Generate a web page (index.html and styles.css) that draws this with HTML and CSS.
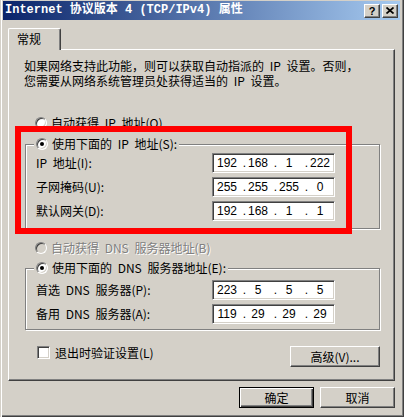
FILE: index.html
```html
<!DOCTYPE html>
<html lang="zh-CN">
<head>
    <meta charset="UTF-8">
    <title>Internet 协议版本 4 (TCP/IPv4) 属性</title>
    <link rel="stylesheet" href="styles.css">
</head>
<body>
    <div class="window">
        <div class="titlebar">
            <span class="title">Internet 协议版本 4 (TCP/IPv4) 属性</span>
            <div class="caption-btns">
                <span class="cbtn help">?</span>
                <span class="cbtn close">
                    <svg width="8" height="7" viewBox="0 0 8 7"><path d="M0.5 0.5L7.5 6.5M7.5 0.5L0.5 6.5" stroke="#000" stroke-width="1.7"/></svg>
                </span>
            </div>
        </div>

        <div class="content">
            <div class="tabs">
                <div class="tab active">常规</div>
            </div>

            <div class="panel">
                <div class="intro">
                    <p>如果网络支持此功能，则可以获取自动指派的 IP 设置。否则，</p>
                    <p>您需要从网络系统管理员处获得适当的 IP 设置。</p>
                </div>

                <div class="option first">
                    <span class="radio"></span>
                    <span>自动获得 IP 地址(O)</span>
                </div>

                <div class="group ip-group">
                    <div class="legend">
                        <span class="radio checked"></span>
                        <span>使用下面的 IP 地址(S):</span>
                    </div>
                    <div class="rows">
                        <label>IP 地址(I):</label>
                        <div class="ip-box"><span>192</span><i>.</i><span>168</span><i>.</i><span>1</span><i>.</i><span>222</span></div>
                        <label>子网掩码(U):</label>
                        <div class="ip-box"><span>255</span><i>.</i><span>255</span><i>.</i><span>255</span><i>.</i><span>0</span></div>
                        <label>默认网关(D):</label>
                        <div class="ip-box"><span>192</span><i>.</i><span>168</span><i>.</i><span>1</span><i>.</i><span>1</span></div>
                    </div>
                </div>

                <div class="option disabled dns-auto">
                    <span class="radio"></span>
                    <span>自动获得 DNS 服务器地址(B)</span>
                </div>

                <div class="group dns-group">
                    <div class="legend">
                        <span class="radio checked"></span>
                        <span>使用下面的 DNS 服务器地址(E):</span>
                    </div>
                    <div class="rows">
                        <label>首选 DNS 服务器(P):</label>
                        <div class="ip-box"><span>223</span><i>.</i><span>5</span><i>.</i><span>5</span><i>.</i><span>5</span></div>
                        <label>备用 DNS 服务器(A):</label>
                        <div class="ip-box"><span>119</span><i>.</i><span>29</span><i>.</i><span>29</span><i>.</i><span>29</span></div>
                    </div>
                </div>

                <div class="footer-row">
                    <span class="checkbox"></span>
                    <span class="check-label">退出时验证设置(L)</span>
                    <div class="btn advanced">高级(V)...</div>
                </div>
            </div>

            <div class="actions">
                <div class="btn default">确定</div>
                <div class="btn">取消</div>
            </div>
        </div>

        <div class="highlight"></div>
    </div>
</body>
</html>
```

FILE: styles.css
```css
* {
    box-sizing: border-box;
    margin: 0;
    padding: 0;
}

body {
    background: #d4d0c8;
    font-family: "Noto Sans CJK SC", sans-serif;
    font-size: 12px;
    word-spacing: 3px;
    color: #000;
}

.window {
    position: relative;
    width: 404px;
    height: 417px;
    background: #d4d0c8;
    padding: 1px 4px 0 3px;
    box-shadow: inset 1px 0 #d4d0c8, inset 2px 0 #fff, inset -1px -1px #404040, inset -2px -2px #808080;
}

.titlebar {
    height: 19px;
    display: flex;
    align-items: center;
    padding: 0 2px;
    background: linear-gradient(to right, #0a246a, #a6caf0);
}

.title {
    color: #fff;
    font-family: "Liberation Mono", "Noto Sans CJK SC", monospace;
    font-weight: bold;
    font-size: 12px;
    line-height: 19px;
    word-spacing: 0;
}

.caption-btns {
    margin-left: auto;
    display: flex;
    gap: 2px;
}

.cbtn {
    width: 16px;
    height: 14px;
    display: flex;
    align-items: center;
    justify-content: center;
    background: #d4d0c8;
    border: 1px solid;
    border-color: #fff #404040 #404040 #fff;
    box-shadow: inset -1px -1px #808080;
    font-family: "Liberation Sans", sans-serif;
    font-weight: bold;
    font-size: 11px;
    line-height: 12px;
}

.content {
    padding: 8px 5px 0 5px;
}

.tabs {
    display: flex;
    height: 21px;
}

.tab {
    position: relative;
    z-index: 1;
    width: 53px;
    height: 22px;
    padding: 3px 0 0 8px;
    line-height: 14px;
    background: #d4d0c8;
    border-top: 1px solid #fff;
    border-left: 1px solid #fff;
    border-right: 1px solid #404040;
    border-radius: 2px 2px 0 0;
    box-shadow: inset -1px 0 #808080;
}

.panel {
    height: 332px;
    border: 1px solid;
    border-color: #fff #404040 #404040 #fff;
    box-shadow: inset -1px -1px #808080;
    padding: 8px 14px 0 15px;
}

.intro p {
    height: 15px;
    line-height: 15px;
    white-space: nowrap;
}

.option {
    display: flex;
    align-items: center;
    gap: 4px;
    height: 14px;
    line-height: 14px;
    margin-left: 11px;
}

.option.first {
    margin-top: 28px;
}

.option.dns-auto {
    margin-top: 12px;
}

.disabled {
    color: #808080;
    text-shadow: 1px 1px #fff;
}

.radio {
    position: relative;
    width: 12px;
    height: 12px;
    flex: none;
    border-radius: 50%;
    background: #fff;
    border: 1px solid;
    border-color: #808080 #fff #fff #808080;
    box-shadow: inset 1px 1px #404040, inset -1px -1px #d4d0c8;
}

.disabled .radio {
    background: #d4d0c8;
}

.radio.checked::after {
    content: "";
    position: absolute;
    left: 3px;
    top: 3px;
    width: 4px;
    height: 4px;
    border-radius: 50%;
    background: #000;
}

.group {
    margin-left: 1px;
    border: 1px solid #808080;
    box-shadow: inset 1px 1px #fff, 1px 1px #fff;
    padding: 0 0 0 10px;
}

.ip-group {
    margin-top: 14px;
    padding-bottom: 7px;
}

.dns-group {
    margin-top: 13px;
    padding-bottom: 5px;
}

.legend {
    display: flex;
    align-items: center;
    gap: 4px;
    width: fit-content;
    height: 14px;
    line-height: 14px;
    margin: -8px 0 0 -2px;
    padding: 0 2px;
    background: #d4d0c8;
}

.rows {
    display: grid;
    grid-template-columns: 176px 123px;
    row-gap: 4px;
    align-items: center;
    margin-top: 2px;
}

.dns-group .rows {
    margin-top: 5px;
}

.rows label {
    line-height: 14px;
}

.ip-box {
    height: 20px;
    display: flex;
    align-items: center;
    padding-left: 2px;
    background: #fff;
    border: 1px solid;
    border-color: #808080 #fff #fff #808080;
    box-shadow: inset 1px 1px #404040, inset -1px -1px #d4d0c8;
    font-family: "Liberation Sans", sans-serif;
    font-size: 12px;
    word-spacing: 0;
}

.ip-box span {
    width: 24px;
    text-align: center;
}

.ip-box i {
    font-style: normal;
    width: 7px;
    text-align: right;
}

.footer-row {
    display: flex;
    align-items: flex-start;
    margin-top: 16px;
    padding-left: 13px;
}

.checkbox {
    width: 13px;
    height: 13px;
    background: #fff;
    border: 1px solid;
    border-color: #808080 #fff #fff #808080;
    box-shadow: inset 1px 1px #404040, inset -1px -1px #d4d0c8;
}

.check-label {
    margin-left: 5px;
    line-height: 13px;
}

.btn {
    display: flex;
    align-items: center;
    justify-content: center;
    width: 75px;
    height: 21px;
    background: #d4d0c8;
    border: 1px solid;
    border-color: #fff #404040 #404040 #fff;
    box-shadow: inset -1px -1px #808080;
    line-height: 14px;
}

.btn.advanced {
    width: 90px;
    margin-left: auto;
}

.btn.default {
    border: 1px solid #000;
    box-shadow: inset 1px 1px #fff, inset -1px -1px #404040, inset -2px -2px #808080;
}

.actions {
    display: flex;
    justify-content: flex-end;
    gap: 6px;
    margin-top: 6px;
}

.highlight {
    position: absolute;
    left: 15px;
    top: 126px;
    width: 337px;
    height: 108px;
    border: 6px solid #f00;
}
```
